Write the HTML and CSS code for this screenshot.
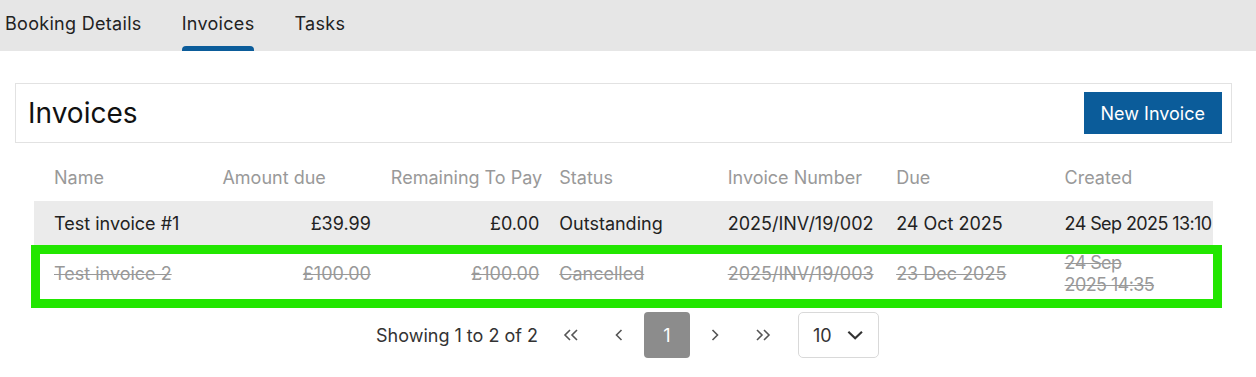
FILE: index.html
```html
<!DOCTYPE html>
<html>
  <head>
    <title>Invoices</title>
    <link rel="stylesheet" href="styles.css">
  </head>
  <body>
    <nav class="tabs">
      <a class="tab">Booking Details</a>
      <a class="tab active">Invoices</a>
      <a class="tab">Tasks</a>
    </nav>

    <main class="content">
      <div class="card-header">
        <h2>Invoices</h2>
        <button class="btn-primary">New Invoice</button>
      </div>

      <div class="invoice-table">
        <div class="row head">
          <div class="cell">Name</div>
          <div class="cell">Amount due</div>
          <div class="cell">Remaining To Pay</div>
          <div class="cell">Status</div>
          <div class="cell">Invoice Number</div>
          <div class="cell">Due</div>
          <div class="cell">Created</div>
        </div>
        <div class="row shaded">
          <div class="cell">Test invoice #1</div>
          <div class="cell num">£39.99</div>
          <div class="cell num">£0.00</div>
          <div class="cell">Outstanding</div>
          <div class="cell">2025/INV/19/002</div>
          <div class="cell">24 Oct 2025</div>
          <div class="cell date">24 Sep 2025 13:10</div>
        </div>
        <div class="row cancelled highlighted">
          <div class="cell"><s>Test invoice 2</s></div>
          <div class="cell num"><s>£100.00</s></div>
          <div class="cell num"><s>£100.00</s></div>
          <div class="cell"><s>Cancelled</s></div>
          <div class="cell"><s>2025/INV/19/003</s></div>
          <div class="cell"><s>23 Dec 2025</s></div>
          <div class="cell date"><s>24 Sep<br>2025 14:35</s></div>
        </div>
      </div>

      <div class="pager">
        <span class="pager-info">Showing 1 to 2 of 2</span>
        <div class="pager-buttons">
          <button class="page-btn" title="First">
            <svg width="16" height="12" viewBox="0 0 16 12"><path d="M7 1 2 6l5 5M14 1 9 6l5 5" fill="none" stroke="#555" stroke-width="1.6"/></svg>
          </button>
          <button class="page-btn" title="Previous">
            <svg width="8" height="12" viewBox="0 0 8 12"><path d="M6.5 1 1.5 6l5 5" fill="none" stroke="#555" stroke-width="1.6"/></svg>
          </button>
          <button class="page-btn current">1</button>
          <button class="page-btn" title="Next">
            <svg width="8" height="12" viewBox="0 0 8 12"><path d="M1.5 1l5 5-5 5" fill="none" stroke="#555" stroke-width="1.6"/></svg>
          </button>
          <button class="page-btn" title="Last">
            <svg width="16" height="12" viewBox="0 0 16 12"><path d="M2 1l5 5-5 5M9 1l5 5-5 5" fill="none" stroke="#555" stroke-width="1.6"/></svg>
          </button>
        </div>
        <div class="page-size">
          <span>10</span>
          <svg width="18" height="10" viewBox="0 0 18 10"><path d="M1.5 1.5 9 8.5l7.5-7" fill="none" stroke="#333" stroke-width="2.4"/></svg>
        </div>
      </div>
    </main>
  </body>
</html>
```

FILE: styles.css
```css
body {
  margin: 0;
  font-family: Inter, "Noto Sans", sans-serif;
  font-size: 18px;
  color: #222;
  background-color: #fff;
}

.tabs {
  display: flex;
  gap: 40px;
  height: 51px;
  padding-left: 5px;
  background-color: #e6e6e6;
}

.tab {
  display: flex;
  align-items: center;
  position: relative;
  padding-bottom: 4px;
  letter-spacing: 0.3px;
  color: #222;
  cursor: pointer;
}

.tab.active::after {
  content: "";
  position: absolute;
  left: 0;
  right: 0;
  bottom: 0;
  height: 5px;
  border-radius: 4px 4px 0 0;
  background-color: #0b5c9a;
}

.content {
  padding: 32px 24px 0 15px;
}

.card-header {
  display: flex;
  justify-content: space-between;
  align-items: center;
  height: 58px;
  padding: 0 9px 0 12px;
  border: 1px solid #e2e2e2;
}

.card-header h2 {
  margin: 0;
  font-size: 28px;
  font-weight: 400;
  color: #111;
}

.btn-primary {
  height: 42px;
  padding: 0 17px;
  font-family: inherit;
  font-size: 18px;
  color: #fff;
  background-color: #0b5c9a;
  border: none;
  cursor: pointer;
}

.invoice-table {
  margin: 12px 19px 0 19px;
}

.row {
  display: grid;
  grid-template-columns: repeat(7, minmax(0, 1fr));
  align-items: center;
  min-height: 46px;
}

.cell {
  padding: 0 0 0 20px;
  line-height: 22px;
  white-space: nowrap;
}

.cell.num {
  text-align: right;
}

.cell.date {
  letter-spacing: -0.6px;
}

.row.head .cell {
  color: #999;
}

.row.shaded {
  background-color: #ebebeb;
}

.row.cancelled {
  padding: 4px 0;
  color: #999;
}

.row.cancelled s {
  text-decoration-thickness: 1px;
}

.row.highlighted {
  position: relative;
}

.row.highlighted::after {
  content: "";
  position: absolute;
  top: -2px;
  left: -3px;
  right: -9px;
  bottom: -7px;
  border: 9px solid #22e600;
  pointer-events: none;
}

.pager {
  display: flex;
  justify-content: center;
  align-items: center;
  margin-top: 11px;
  padding-left: 8px;
}

.pager-info {
  color: #333;
}

.pager-buttons {
  display: flex;
  gap: 2px;
  margin: 0 12px 0 10px;
}

.page-btn {
  display: flex;
  justify-content: center;
  align-items: center;
  width: 46px;
  height: 46px;
  padding: 0;
  font-family: inherit;
  font-size: 18px;
  color: #fff;
  background: none;
  border: none;
  border-radius: 4px;
  cursor: pointer;
}

.page-btn.current {
  background-color: #8c8c8c;
}

.page-size {
  display: flex;
  align-items: center;
  gap: 15px;
  box-sizing: border-box;
  width: 81px;
  height: 46px;
  padding: 0 15px 0 14px;
  color: #333;
  border: 1px solid #d9d9d9;
  border-radius: 5px;
}
```
